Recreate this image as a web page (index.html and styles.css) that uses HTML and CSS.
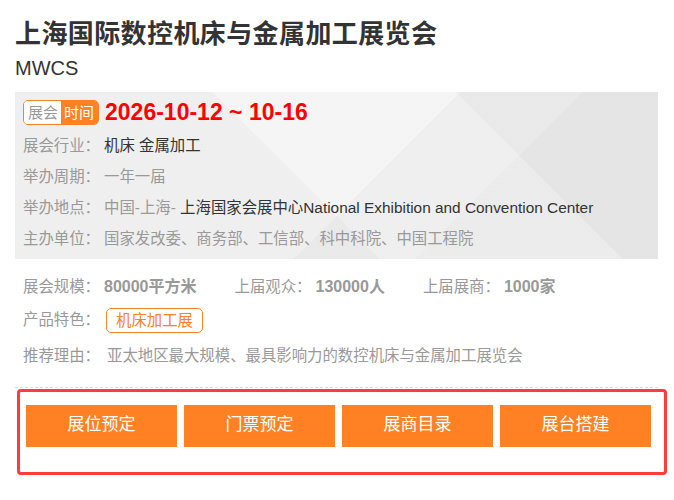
FILE: index.html
```html
<!DOCTYPE html>
<html lang="zh-CN">
<head>
<meta charset="utf-8">
<title>上海国际数控机床与金属加工展览会</title>
<link rel="stylesheet" href="styles.css">
</head>
<body>
<div class="page">
  <header class="header">
    <h1 class="title">上海国际数控机床与金属加工展览会</h1>
    <div class="subtitle">MWCS</div>
  </header>

  <section class="panel">
    <div class="date-row">
      <span class="date-tag"><span class="tag-a">展会</span><span class="tag-b">时间</span></span>
      <span class="date">2026-10-12 ~ 10-16</span>
    </div>
    <div class="row"><span class="label">展会行业：</span><span class="value dark">机床 金属加工</span></div>
    <div class="row"><span class="label">举办周期：</span><span class="value">一年一届</span></div>
    <div class="row"><span class="label">举办地点：</span><span class="value">中国-上海- <span class="dark">上海国家会展中心National Exhibition and Convention Center</span></span></div>
    <div class="row"><span class="label">主办单位：</span><span class="value">国家发改委、商务部、工信部、科中科院、中国工程院</span></div>
  </section>

  <section class="info">
    <div class="stats">
      <span class="stat"><span class="label-s">展会规模：</span><b>80000平方米</b></span>
      <span class="stat"><span class="label-s">上届观众：</span><b>130000人</b></span>
      <span class="stat"><span class="label-s">上届展商：</span><b>1000家</b></span>
    </div>
    <div class="info-row">
      <span class="label-i">产品特色：</span><span class="feature">机床加工展</span>
    </div>
    <div class="info-row reason">
      <span class="label-i">推荐理由：</span><span>亚太地区最大规模、最具影响力的数控机床与金属加工展览会</span>
    </div>
  </section>

  <div class="divider"></div>

  <nav class="actions">
    <a class="btn">展位预定</a>
    <a class="btn">门票预定</a>
    <a class="btn">展商目录</a>
    <a class="btn">展台搭建</a>
  </nav>
</div>
</body>
</html>
```

FILE: styles.css
```css
html, body {
  margin: 0;
  padding: 0;
  background: #ffffff;
}
body {
  font-family: "Liberation Sans", "Noto Sans CJK SC", sans-serif;
  color: #333333;
}
.page {
  width: 643px;
  padding: 16px 16px 0 15px;
}
.title {
  margin: 0;
  font-size: 26px;
  letter-spacing: 0.4px;
  line-height: 36px;
  font-weight: bold;
  color: #333333;
}
.subtitle {
  font-size: 20px;
  line-height: 26px;
  color: #333333;
  margin-top: 3px;
}
.panel {
  margin-top: 11px;
  height: 167px;
  box-sizing: border-box;
  padding: 8px 8px 0 8px;
  background-color: #efefef;
  background-image:
    linear-gradient(135deg, rgba(255,255,255,0) 0 55%, rgba(0,0,0,0.025) 55% 100%),
    linear-gradient(45deg, rgba(255,255,255,0) 0 45%, rgba(255,255,255,0.35) 45% 75%, rgba(255,255,255,0) 75%),
    linear-gradient(-45deg, rgba(0,0,0,0.02) 0 30%, rgba(255,255,255,0) 30%);
}
.date-row {
  display: flex;
  align-items: center;
  height: 25px;
  gap: 6px;
}
.date-tag {
  display: inline-flex;
  height: 25px;
  box-sizing: border-box;
  border: 1px solid #ff8124;
  border-radius: 5px;
  overflow: hidden;
  font-size: 15px;
  line-height: 23px;
}
.tag-a {
  background: #ffffff;
  color: #999999;
  padding: 0 3px 0 4px;
}
.tag-b {
  background: #ff8124;
  color: #ffffff;
  padding: 0 4px 0 3px;
}
.date {
  font-size: 23px;
  font-weight: bold;
  color: #ff0000;
  line-height: 25px;
}
.row {
  display: flex;
  font-size: 15.4px;
  line-height: 31px;
  color: #999999;
}
.date-row + .row {
  margin-top: 5px;
}
.label {
  width: 81px;
  flex: none;
  color: #999999;
}
.value {
  color: #999999;
}
.dark {
  color: #333333;
}
.info {
  padding: 13px 0 0 8px;
  font-size: 15.4px;
  color: #999999;
}
.stats {
  display: flex;
  gap: 38px;
  line-height: 30px;
}
.stat {
  display: flex;
}
.label-s {
  width: 81px;
  flex: none;
}
.stats b {
  color: #999999;
  font-weight: bold;
  font-size: 16px;
}
.info-row {
  display: flex;
  align-items: center;
  margin-top: 3px;
  line-height: 30px;
}
.label-i {
  width: 84px;
  flex: none;
}
.feature {
  display: inline-block;
  box-sizing: border-box;
  height: 25px;
  line-height: 23px;
  padding: 0 9px;
  border: 1px solid #ff8124;
  border-radius: 5px;
  color: #ff8124;
  margin-left: -1px;
}
.reason {
  margin-top: 6px;
}
.divider {
  margin-top: 16px;
  border-top: 1px dashed #dddddd;
}
.actions {
  margin: 1px 0 0 2px;
  width: 650px;
  height: 86px;
  box-sizing: border-box;
  border: 3px solid #ff3b3b;
  border-radius: 4px;
  padding: 13px 0 0 6px;
  display: flex;
  align-items: flex-start;
  gap: 7px;
}
.btn {
  width: 151px;
  height: 42px;
  background: #ff8124;
  color: #ffffff;
  font-size: 17px;
  line-height: 40px;
  text-align: center;
  text-decoration: none;
}
```
